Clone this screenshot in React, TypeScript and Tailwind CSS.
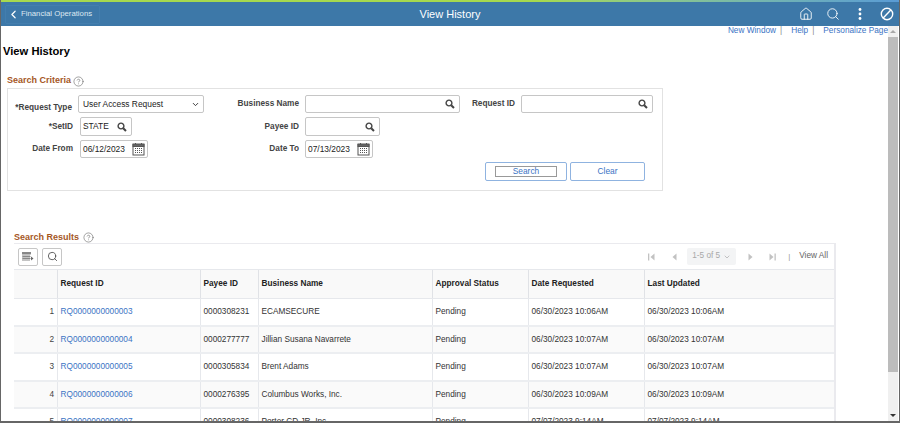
import React from "react";
import { ChevronLeft, Home, Search, ChevronDown, CircleHelp } from "lucide-react";

const Help = ({ className = "" }: { className?: string }) => (
  <CircleHelp size={11} strokeWidth={1.3} className={"text-[#666] " + className} />
);

const Glass = () => (
  <svg width="10" height="10" viewBox="0 0 10 10" fill="none" stroke="#444" strokeWidth="1.4">
    <circle cx="4" cy="4" r="2.9" />
    <path d="M6.2 6.2 9 9" strokeWidth="2" />
  </svg>
);

const Cal = () => (
  <svg width="13" height="14" viewBox="0 0 13 14" fill="none" stroke="#555" strokeWidth="1">
    <rect x="1" y="2.5" width="11" height="10.5" fill="#fff" />
    <rect x="1" y="2" width="11" height="2.5" fill="#666" />
    <path d="M3.5 1v2M9.5 1v2" />
    <path d="M3 6.5h7M3 8.5h7M3 10.5h7" strokeDasharray="1 1" />
  </svg>
);

const Label = ({ w, children, className = "" }: { w: string; children: React.ReactNode; className?: string }) => (
  <div className={"text-right font-bold text-[8.25px] text-[#444] shrink-0 " + w + " " + className}>{children}</div>
);

const inputCls =
  "h-full border border-[#c6c6c6] rounded-[2px] bg-white flex items-center justify-between text-[8.4px] text-[#222] pl-[2px] pr-[4px] shrink-0";

const rows = [
  ["1", "RQ0000000000003", "0000308231", "ECAMSECURE", "Pending", "06/30/2023 10:06AM", "06/30/2023 10:06AM"],
  ["2", "RQ0000000000004", "0000277777", "Jillian Susana Navarrete", "Pending", "06/30/2023 10:07AM", "06/30/2023 10:07AM"],
  ["3", "RQ0000000000005", "0000305834", "Brent Adams", "Pending", "06/30/2023 10:07AM", "06/30/2023 10:07AM"],
  ["4", "RQ0000000000006", "0000276395", "Columbus Works, Inc.", "Pending", "06/30/2023 10:09AM", "06/30/2023 10:09AM"],
  ["5", "RQ0000000000007", "0000308236", "Porter CD JR, Inc.", "Pending", "07/07/2023 9:14AM", "07/07/2023 9:14AM"],
];

const cols = ["w-[44px]", "w-[143px]", "w-[58px]", "w-[174px]", "w-[96px]", "w-[116px]", "flex-1"];
const heads = ["", "Request ID", "Payee ID", "Business Name", "Approval Status", "Date Requested", "Last Updated"];

export default function App() {
  return (
    <div className="w-[900px] h-[423px] overflow-hidden bg-white relative flex flex-col border-l border-r border-b-2 border-[#666] font-['Liberation_Sans',Arial,sans-serif]">
      {/* Header */}
      <header className="h-[26px] shrink-0 flex flex-col">
        <div className="h-[2px] bg-gradient-to-r from-[#a6d84e] via-[#a6d84e] via-60% to-[#5a9bd5]" />
        <div className="flex-1 bg-[#3d78a8] flex items-center relative">
          <div className="flex items-center ml-[4px] pl-[1px] pr-[7px] h-[19px] gap-[1px] text-white border border-[#437eae] rounded-[2px]">
            <ChevronLeft size={13} strokeWidth={2.2} />
            <span className="text-[7.75px] text-[#dde8f1]">Financial Operations</span>
          </div>
          <div className="absolute left-0 right-0 text-center text-[11px] text-white pointer-events-none">View History</div>
          <div className="ml-auto flex items-center gap-[13px] mr-[5px] text-white">
            <Home size={14} strokeWidth={1.5} />
            <Search size={14} strokeWidth={1.5} />
            <svg width="14" height="14" viewBox="0 0 14 14" fill="#fff">
              <circle cx="7" cy="2.5" r="1.4" /><circle cx="7" cy="7" r="1.4" /><circle cx="7" cy="11.5" r="1.4" />
            </svg>
            <svg width="14" height="14" viewBox="0 0 14 14" fill="none" stroke="#fff" strokeWidth="1.4">
              <circle cx="7" cy="7" r="5.7" /><path d="M3.2 11 10.8 3" />
            </svg>
          </div>
        </div>
      </header>

      <div className="flex-1 flex min-h-0">
        <main className="flex-1 min-w-0 overflow-hidden">
          {/* Links */}
          <div className="h-[11px] flex justify-end items-center text-[8.25px] text-[#3b73c4]">
            <span>New Window</span>
            <span className="text-[#888] ml-[4px] mr-[9px]">|</span>
            <span>Help</span>
            <span className="text-[#888] ml-[4px] mr-[9px]">|</span>
            <span>Personalize Page</span>
          </div>

          <h1 className="mt-[7px] ml-[2px] text-[11.2px] leading-[14px] font-bold text-black">View History</h1>

          <div className="mt-[17px] ml-[6px] flex items-center gap-[2px] h-[12px]">
            <span className="text-[9px] font-bold text-[#a5571f]">Search Criteria</span>
            <Help />
          </div>

          {/* Criteria */}
          <section className="ml-[6px] mt-[1px] w-[656px] h-[103px] border border-[#e2e2e2] pt-[6px]">
            <div className="flex items-center h-[18px]">
              <Label w="w-[64px]" className="translate-y-[4px]">*Request Type</Label>
              <div className={inputCls + " ml-[6px] w-[126px] !pl-[4px] !pr-[3px]"}>
                <span>User Access Request</span>
                <ChevronDown size={9} strokeWidth={2.5} className="text-[#333]" />
              </div>
              <Label w="w-[95px]">Business Name</Label>
              <div className={inputCls + " ml-[6px] w-[155px]"}>
                <span /><Glass />
              </div>
              <Label w="w-[55px]">Request ID</Label>
              <div className={inputCls + " ml-[6px] w-[132px]"}>
                <span /><Glass />
              </div>
            </div>
            <div className="flex items-center h-[19px] mt-[4px]">
              <Label w="w-[65px]" className="translate-y-[1px]">*SetID</Label>
              <div className={inputCls + " ml-[7px] w-[52px]"}>
                <span>STATE</span><Glass />
              </div>
              <Label w="w-[167px]" className="translate-y-[1px]">Payee ID</Label>
              <div className={inputCls + " ml-[6px] w-[75px]"}>
                <span /><Glass />
              </div>
            </div>
            <div className="flex items-center h-[18px] mt-[4px]">
              <Label w="w-[65px]">Date From</Label>
              <div className={inputCls + " ml-[7px] w-[68px] !pr-[2px]"}>
                <span>06/12/2023</span><Cal />
              </div>
              <Label w="w-[151px]">Date To</Label>
              <div className={inputCls + " ml-[6px] w-[68px] !pr-[2px]"}>
                <span>07/13/2023</span><Cal />
              </div>
            </div>
            <div className="flex mt-[4px] ml-[477px] gap-[3px]">
              <button className="w-[82px] h-[19px] border border-[#8fb3e0] rounded-[2px] flex items-center justify-center">
                <span className="w-[62px] h-[11px] border border-[#999] flex items-center justify-center text-[8.4px] text-[#3b73c4]">Search</span>
              </button>
              <button className="w-[75px] h-[19px] border border-[#8fb3e0] rounded-[2px] text-[8.4px] text-[#3b73c4]">Clear</button>
            </div>
          </section>

          <div className="mt-[40px] ml-[13px] flex items-center gap-[4px] h-[12px] pt-[1px]">
            <span className="text-[9px] font-bold text-[#a5571f]">Search Results</span>
            <Help />
          </div>

          {/* Grid */}
          <section className="ml-[13px] w-[822px] border-t border-r-2 border-[#eaeaee]">
            <div className="h-[25px] flex items-center pl-[4px]">
              <button className="w-[20px] h-[18px] border border-[#c6c6c6] rounded-[2px] flex items-center justify-center mr-[4px]">
                <svg width="12" height="10" viewBox="0 0 12 10" fill="none" stroke="#888" strokeWidth="1">
                  <rect x="0.5" y="0.5" width="8" height="1.4" fill="#777" />
                  <path d="M1 2.5v6.5M3 2.5v6.5M5 2.5v6.5M7 2.5v6.5M0.5 4.5h8M0.5 6.5h8" />
                  <path d="M9 4.5l2.5 2-2.5 2z" fill="#666" stroke="none" />
                </svg>
              </button>
              <button className="w-[20px] h-[18px] border border-[#c6c6c6] rounded-[2px] flex items-center justify-center">
                <Search size={11} strokeWidth={1.8} className="text-[#444]" />
              </button>
              <div className="ml-auto flex items-center pr-[6px]">
                <svg width="9" height="8" viewBox="0 0 9 8" fill="#c2c2c2" className="mr-[15px]"><rect x="1" y="0.5" width="1.3" height="7" /><path d="M7.5 0.5v7L3.5 4z" /></svg>
                <svg width="7" height="8" viewBox="0 0 7 8" fill="#c2c2c2" className="mr-[9px]"><path d="M5.5 0.5v7L1.5 4z" /></svg>
                <div className="w-[49px] h-[17px] rounded-[2px] bg-[#f3f4f5] flex items-center justify-center gap-[3px] text-[8.25px] text-[#a8a8a8]">
                  <span>1-5 of 5</span>
                  <ChevronDown size={8} strokeWidth={2} />
                </div>
                <svg width="7" height="8" viewBox="0 0 7 8" fill="#c2c2c2" className="ml-[11px]"><path d="M1.5 0.5v7L5.5 4z" /></svg>
                <svg width="9" height="8" viewBox="0 0 9 8" fill="#c2c2c2" className="ml-[14px]"><path d="M1.5 0.5v7L5.5 4z" /><rect x="6.5" y="0.5" width="1.3" height="7" /></svg>
                <span className="ml-[11px] text-[#999] text-[8px]">|</span>
                <span className="ml-[9px] text-[8.25px] text-[#666]">View All</span>
              </div>
            </div>
            <div className="flex h-[30px] bg-[#f9f9f9] border-t border-b border-[#e6e8ec]">
              {heads.map((h, i) => (
                <div key={i} className={cols[i] + " shrink-0 border-r last:border-r-0 border-[#e0e2e6] flex items-center pl-[2.5px] text-[8.25px] font-bold text-[#222]"}>{h}</div>
              ))}
            </div>
            {rows.map((r, ri) => (
              <div key={ri} className={"flex h-[27.5px] border-b-2 border-[#eceef1] " + (ri % 2 ? "bg-[#fafafa]" : "bg-white")}>
                {r.map((c, i) => (
                  <div key={i} className={cols[i] + " shrink-0 border-r last:border-r-0 border-[#e6e8ec] flex items-center pt-[1px] text-[8.25px] " +
                    (i === 0 ? "justify-end pr-[3px] text-[#444]" : i === 1 ? "pl-[2.5px] text-[#3b73c4]" : "pl-[2.5px] text-[#333]")}>{c}</div>
                ))}
              </div>
            ))}
          </section>
        </main>

        {/* Scrollbar */}
        <div className="w-[10px] mr-[1px] bg-[#f0f0f0] flex flex-col shrink-0">
          <div className="h-[11px] flex items-center justify-center">
            <div className="border-x-[3px] border-x-transparent border-b-[3px] border-b-[#a8a8a8]" />
          </div>
          <div className="h-[335px] bg-[#bcbcbc]" />
          <div className="flex-1 flex items-end justify-center pb-[4px]">
            <div className="border-x-[3px] border-x-transparent border-t-[3px] border-t-[#333]" />
          </div>
        </div>
      </div>
    </div>
  );
}
